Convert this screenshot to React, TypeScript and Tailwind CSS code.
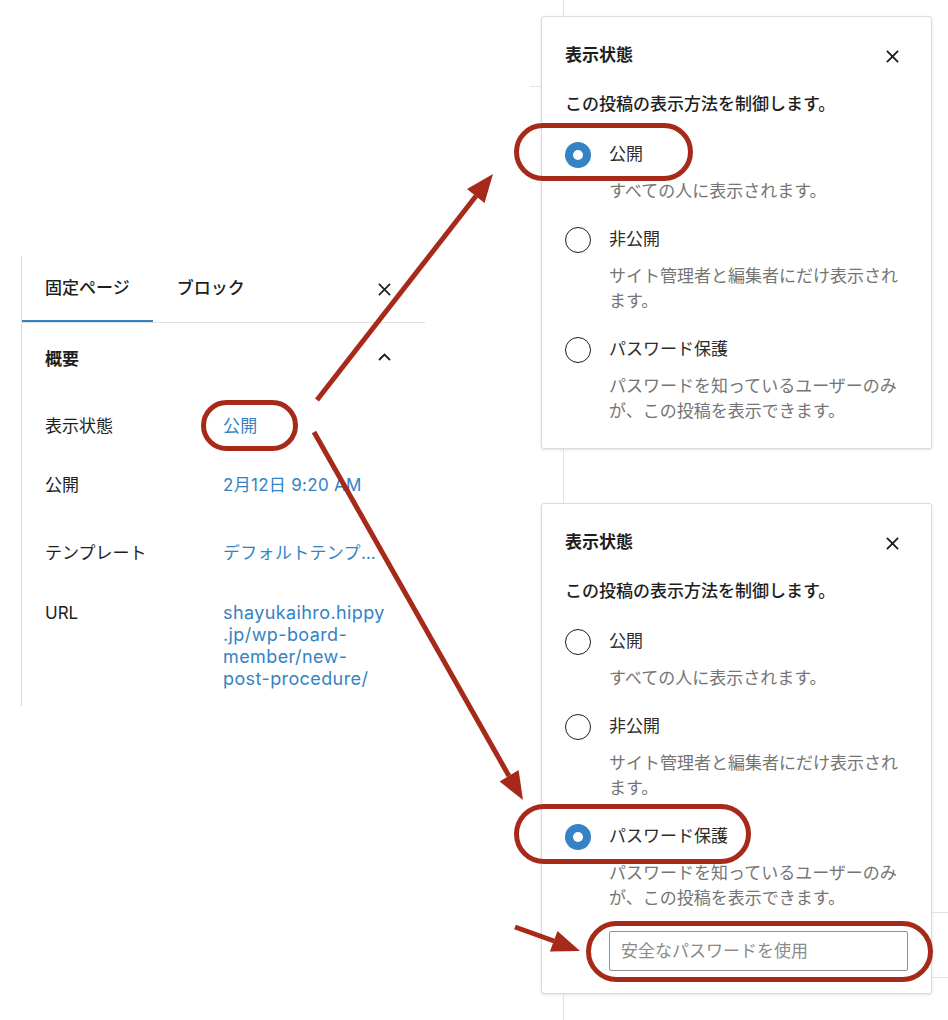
import React from 'react'

const options = [
  { label: '公開', help: 'すべての人に表示されます。' },
  { label: '非公開', help: 'サイト管理者と編集者にだけ表示されます。' },
  { label: 'パスワード保護', help: 'パスワードを知っているユーザーのみが、この投稿を表示できます。' },
]

const summary = [
  { label: '表示状態', value: ['公開'], mt: 'mt-[45px]' },
  { label: '公開', value: ['2月12日 9:20 AM'], mt: 'mt-[37px]' },
  { label: 'テンプレート', value: ['デフォルトテンプ…'], mt: 'mt-[46px]' },
  {
    label: 'URL',
    value: ['shayukaihro.hippy', '.jp/wp-board-', 'member/new-', 'post-procedure/'],
    mt: 'mt-[38px]',
  },
]

const CloseIcon = ({ size = 13, stroke = 1.8 }: { size?: number; stroke?: number }) => (
  <svg width={size} height={size} viewBox="0 0 14 14" fill="none" stroke="#1e1e1e" strokeWidth={stroke}>
    <path d="M1 1l12 12M13 1L1 13" />
  </svg>
)

const Radio = ({ checked }: { checked?: boolean }) =>
  checked ? (
    <span className="flex h-[26px] w-[26px] shrink-0 items-center justify-center rounded-full bg-[#3582c4]">
      <span className="h-[10px] w-[10px] rounded-full bg-white" />
    </span>
  ) : (
    <span className="h-[26px] w-[26px] shrink-0 rounded-full border-[1.5px] border-[#1e1e1e]" />
  )

const Sidebar = () => (
  <div className="flex h-[450px] w-[404px] flex-col border-l-[1.5px] border-[#dcdcdc]">
    <div className="flex h-[67px] items-stretch border-b-[1.5px] border-[#e0e0e0] pr-[34px]">
      <div className="flex items-center px-[23px] font-medium text-[#1e1e1e] shadow-[inset_0_-2px_0_#3582c4]">
        固定ページ
      </div>
      <div className="flex items-center px-[24px] font-medium text-[#1e1e1e]">ブロック</div>
      <div className="ml-auto flex items-center">
        <CloseIcon />
      </div>
    </div>

    <div className="pl-[23px] pr-[34px]">
      <div className="mt-[25px] flex h-[22px] items-center justify-between">
        <span className="font-bold leading-[22px] text-[#1e1e1e]">概要</span>
        <svg width="13" height="8" viewBox="0 0 13 8" fill="none" stroke="#1e1e1e" strokeWidth="1.8" className="-mt-[5px]">
          <path d="M1 7l5.5-5.5L12 7" />
        </svg>
      </div>

      {summary.map((row) => (
        <div key={row.label} className={`flex ${row.mt}`}>
          <div className="w-[178px] shrink-0 leading-[22px] text-[#1e1e1e]">{row.label}</div>
          <div className="flex flex-col leading-[22px] text-[#3582c4]">
            {row.value.map((line) => (
              <span key={line} className={row.label === 'URL' ? 'text-[18px] tracking-[0.4px]' : 'tracking-[0.3px]'}>
                {line}
              </span>
            ))}
          </div>
        </div>
      ))}
    </div>
  </div>
)

const VisibilityPopover = ({ selected, password }: { selected: number; password?: boolean }) => (
  <div className="flex w-[391px] flex-col rounded-[3px] border border-[#dcdcdc] bg-white px-[23px] pt-[23px] shadow-[0_1px_3px_rgba(0,0,0,0.12)]">
    <div className="flex h-[32px] items-center justify-between">
      <h2 className="font-bold text-[#1e1e1e]">表示状態</h2>
      <button className="flex h-[32px] w-[32px] items-center justify-center">
        <CloseIcon stroke={2} />
      </button>
    </div>

    <p className="mt-[20px] font-medium leading-[25px] text-[#1e1e1e]">この投稿の表示方法を制御します。</p>

    <div className="mt-[24px] flex flex-col gap-[22px]">
      {options.map((o, i) => (
        <div key={o.label}>
          <label className="flex h-[28px] items-center gap-[18px]">
            <Radio checked={i === selected} />
            <span className="text-[#2c2c2c]">{o.label}</span>
          </label>
          <p className="mt-[10px] pl-[44px] leading-[25px] text-[#757575]">{o.help}</p>
        </div>
      ))}
    </div>

    {password && (
      <input
        type="text"
        readOnly
        placeholder="安全なパスワードを使用"
        className="ml-[44px] mt-[20px] h-[40px] rounded-[2px] border border-[#8c8f94] px-[11px] text-[17px] outline-none placeholder:text-[#8a8a8a]"
      />
    )}
    <div className={password ? 'h-[22px]' : 'h-[24px]'} />
  </div>
)

const Annotations = () => (
  <svg className="pointer-events-none absolute left-0 top-0" width="948" height="1020" viewBox="0 0 948 1020" fill="none">
    <g stroke="#a6291a" strokeWidth="5">
      <rect x="203.5" y="402.5" width="92" height="46" rx="23" />
      <rect x="516.5" y="125.5" width="174" height="53" rx="26.5" />
      <rect x="516.5" y="806.5" width="232" height="55" rx="27.5" />
      <rect x="588.5" y="923.5" width="342" height="56" rx="28" />
      <path d="M317 400L476 196" />
      <path d="M314 432L509 776" />
      <path d="M515 927L554 941" />
    </g>
    <g fill="#a6291a">
      <polygon points="493,174 484.5,203 467,189" />
      <polygon points="523,800 518.6,770 499.6,781.5" />
      <polygon points="580,951 549.9,951.6 557.5,931" />
    </g>
  </svg>
)

export default function App() {
  return (
    <div className="relative h-[1020px] w-[948px] overflow-hidden bg-white font-['Inter','Noto_Sans_CJK_JP',sans-serif] text-[17px]">
      {/* faint editor lines behind the popovers */}
      <div className="absolute left-[563px] top-0 h-[16px] w-px bg-[#e2e2e2]" />
      <div className="absolute left-[563px] top-[449px] h-[54px] w-px bg-[#e2e2e2]" />
      <div className="absolute left-[563px] top-[994px] h-[26px] w-px bg-[#e2e2e2]" />
      <div className="absolute left-[530px] top-[86px] h-px w-[11px] bg-[#e2e2e2]" />
      <div className="absolute left-[932px] top-[912px] h-px w-[16px] bg-[#e2e2e2]" />
      <div className="absolute left-[932px] top-[977px] h-px w-[16px] bg-[#e2e2e2]" />

      <div className="flex">
        <div className="pl-[21px] pt-[256px]">
          <Sidebar />
        </div>
        <div className="ml-[116px] flex flex-col pt-[16px]">
          <VisibilityPopover selected={0} />
          <div className="mt-[54px]">
            <VisibilityPopover selected={2} password />
          </div>
        </div>
      </div>

      <Annotations />
    </div>
  )
}
